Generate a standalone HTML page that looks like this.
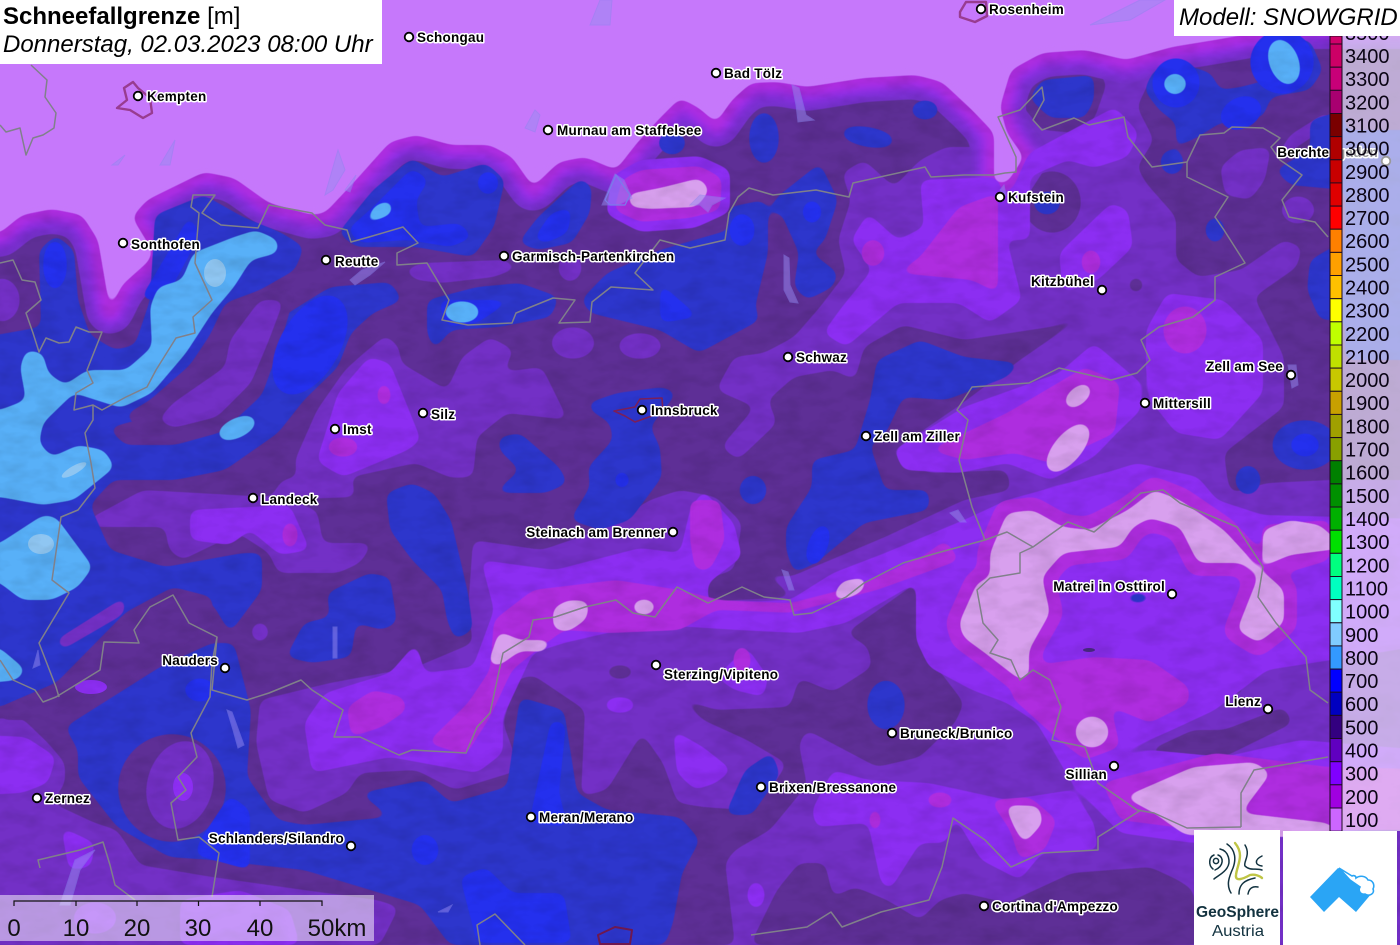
<!DOCTYPE html>
<html lang="de"><head><meta charset="utf-8"><title>Schneefallgrenze</title>
<style>
html,body{margin:0;padding:0;background:#C678FB;width:1400px;height:945px;overflow:hidden}
#w{position:relative;width:1400px;height:945px;overflow:hidden;font-family:"Liberation Sans",sans-serif}
svg{position:absolute;left:0;top:0;display:block}
.c text{font:bold 13.5px "Liberation Sans",sans-serif;letter-spacing:.25px;fill:#000;stroke:#fff;stroke-width:3px;paint-order:stroke;stroke-linejoin:round}
.c .e{text-anchor:end}
.c circle{fill:#fff;stroke:#000;stroke-width:1.8}
.b{fill:none;stroke:#80808a;stroke-width:1.5;stroke-linejoin:round}
.l{fill:#9a8cf2;stroke:#8a86ee;stroke-width:1;opacity:.5}
.box{position:absolute;background:#fff;color:#000;white-space:nowrap}
</style></head><body><div id="w">
<svg width="1400" height="945" viewBox="0 0 1400 945" xmlns="http://www.w3.org/2000/svg">
<defs>
<filter id="g" filterUnits="userSpaceOnUse" x="-100" y="-100" width="1600" height="1100" color-interpolation-filters="sRGB"><feGaussianBlur stdDeviation="5"/><feColorMatrix type="matrix" values="1 0 0 0 0 0 1 0 0 0 0 0 1 0 0 0 0 0 10 -4.5"/></filter>
<filter id="hs" filterUnits="userSpaceOnUse" x="0" y="0" width="1400" height="945" color-interpolation-filters="sRGB"><feTurbulence type="fractalNoise" baseFrequency="0.035 0.07" numOctaves="3" seed="4"/><feColorMatrix type="matrix" values="0 0 0 0 0 0 0 0 0 0 0 0 0 0 0 1.6 0 0 0 -0.62"/></filter>
<polygon id="w1" points="959,623 977,583 990,577 990,553 1007,513 1033,510 1063,527 1089,530 1128,510 1154,490 1180,500 1224,530 1258,567 1284,590 1284,623 1258,643 1237,630 1258,577 1241,563 1198,563 1180,527 1150,518 1133,527 1120,547 1063,553 1042,577 1050,613 1029,650 1029,677 1020,680 985,653 963,637"/>
<polyline id="P" points="-60,233 0,233 22,215 52,209 82,215 98,240 110,310 122,285 150,260 152,250 132,217 147,200 204,172 234,178 269,203 312,215 325,213 356,180 390,142 416,135 451,145 490,145 512,157 533,187 559,162 585,157 616,170 637,143 660,118 680,98 699,108 716,123 732,100 751,83 777,82 807,87 864,78 916,75 942,82 972,110 994,133 994,183 1007,183 1024,157 1007,133 1000,107 1011,70 1042,53 1085,50 1126,60 1172,47 1215,40 1300,25 1460,25"/>
</defs>

<rect x="0" y="0" width="1400" height="945" fill="#7330C6"/>

<!-- dark -->
<g fill="#5E2F96" filter="url(#g)">
<polygon points="-60,150 990,50 990,147 946,147 920,160 894,187 864,160 842,173 851,200 838,240 846,273 820,307 794,337 764,353 734,357 716,390 755,407 721,447 738,460 777,423 768,400 794,377 833,370 855,380 864,347 903,325 964,340 1050,327 1094,312 1059,333 1020,360 960,405 890,453 929,473 1007,470 1011,490 964,500 885,537 790,577 764,573 794,597 738,600 703,603 703,580 734,570 742,523 716,497 680,490 650,500 600,530 542,550 473,540 468,610 473,643 416,667 330,683 260,700 256,743 269,800 304,813 347,793 360,773 416,770 455,790 520,770 503,723 516,680 533,675 585,710 581,797 616,807 680,817 720,820 735,945 -60,945"/>
<polygon points="1137,167 1154,140 1137,107 1150,80 1180,63 1215,60 1270,36 1460,36 1460,480 1330,480 1267,483 1232,493 1228,483 1224,453 1284,407 1284,357 1254,297 1297,267 1302,247 1284,240 1241,270 1198,277 1176,260 1176,217 1146,183"/>
<polygon points="1020,103 1033,77 1094,68 1107,83 1094,120 1076,133 1042,130"/>
<ellipse cx="1052" cy="202" rx="29" ry="31"/>
<polygon points="680,698 716,710 790,707 799,678 833,692 872,667 868,647 846,633 916,583 938,573 955,578 920,610 916,640 964,703 955,723 920,757 877,767 807,730 799,743 803,773 747,740 703,720"/>
<polygon points="660,800 703,807 745,810 770,790 799,745 807,785 770,830 735,850 715,875 728,945 640,945"/>
<polygon points="577,797 607,790 642,733 663,763 680,810 650,810"/>
<polygon points="750,945 777,890 799,863 825,863 833,897 855,887 887,900 920,920 940,900 964,893 1007,903 1072,873 1150,867 1178,880 1193,890 1200,945"/>
<polygon points="1150,540 1176,623 1137,620 1076,603 1042,590 1059,573 1133,567"/>
<ellipse cx="1089" cy="650" rx="37" ry="14"/>
<polygon points="1176,628 1188,630 1246,690 1236,697"/>
<polygon points="1150,750 1193,730 1224,730 1284,707 1293,723 1224,757 1159,757"/>
<polygon points="1308,570 1325,575 1330,650 1312,640"/>
<ellipse cx="620" cy="672" rx="14" ry="7"/>
<ellipse cx="1136" cy="285" rx="8" ry="8"/>
</g>

<!-- mid lobes over dark -->
<g fill="#7330C6" filter="url(#g)">
<polygon points="364,353 386,335 399,347 401,363 447,390 462,357 490,337 514,350 503,372 542,367 568,420 507,413 477,437 473,477 451,478 416,463 351,477 356,497 269,500 282,480 297,477 295,460 317,410 345,370"/>
<polygon points="87,520 143,490 269,497 317,510 323,543 373,543 360,563 338,573 278,573 269,553 238,533 182,560 169,550 165,527 95,527"/>
<polygon points="403,270 423,263 503,260 520,267 494,277 442,283 416,280"/>
<ellipse cx="570" cy="268" rx="12" ry="14"/>
<ellipse cx="573" cy="343" rx="22" ry="16"/>
<ellipse cx="640" cy="346" rx="22" ry="13"/>
<polygon points="-60,720 22,718 48,743 65,763 65,783 52,803 95,823 117,830 140,865 212,877 304,890 377,900 399,907 380,945 -60,945"/>
<ellipse cx="260" cy="632" rx="9" ry="10"/>
<polygon points="1220,167 1240,150 1271,147 1265,180 1250,200 1225,195"/>
<ellipse cx="1298" cy="210" rx="17" ry="14"/>
<polygon points="1277,155 1290,135 1330,110 1330,125 1300,145 1285,155"/>
<ellipse cx="2" cy="300" rx="18" ry="22"/>
</g>

<!-- bands along the snowline -->
<g filter="url(#g)" fill="none" stroke-linejoin="round">
<use href="#P" stroke="#7330C6" stroke-width="48"/>
<use href="#P" stroke="#8C2EF2" stroke-width="32"/>
<use href="#P" stroke="#AE2DDF" stroke-width="20"/>
</g>

<!-- bright purple -->
<g fill="#8C2EF2" filter="url(#g)">
<polygon points="920,180 998,177 1011,230 1007,240 1022,300 990,323 959,303 898,303 846,347 823,333 842,307 872,270 851,240 868,213 898,240 924,227"/>
<polygon points="1029,153 1115,107 1139,133 1128,157 1094,168 1068,160 1015,183"/>
<polygon points="1059,253 1111,203 1128,210 1133,247 1098,280 1063,293"/>
<polygon points="1146,330 1167,293 1224,300 1263,340 1263,393 1220,440 1176,433 1150,400 1146,370"/>
<polygon points="894,450 964,407 1059,373 1094,343 1141,383 1141,410 1120,430 1094,457 1050,480 1007,463 959,473 903,470"/>
<polygon points="304,723 325,693 390,673 416,643 425,673 473,667 494,610 481,560 555,570 640,548 680,553 690,510 703,490 734,523 742,557 725,570 708,583 708,603 790,600 833,573 885,553 964,520 1007,500 1115,470 1137,463 1198,477 1217,500 1263,515 1460,520 1460,640 1267,670 1215,710 1172,730 1098,763 1150,750 1224,757 1300,740 1460,753 1460,823 1193,843 1120,833 1072,783 1037,723 1007,703 972,690 929,667 916,640 916,583 846,623 799,633 738,630 660,625 607,633 564,643 533,653 503,717 503,753 477,773 390,757 312,773"/>
<polygon points="812,810 833,770 868,780 929,783 1007,800 1072,790 1094,823 1098,850 1042,853 1020,880 981,860 955,817 946,843 920,843 911,857 890,890 881,883 868,823 816,827"/>
<polygon points="673,730 703,747 732,770 716,783 695,790 677,773"/>
<polygon points="716,677 747,647 768,677 764,697 734,690"/>
<ellipse cx="620" cy="705" rx="16" ry="8"/>
<polygon points="190,510 290,505 310,550 280,555 250,530 230,545 190,540"/>
<polygon points="317,460 338,393 369,357 390,363 421,440 408,450 343,477 319,463"/>
<polygon points="-60,733 26,737 56,757 48,783 22,793 -60,797"/>
<polygon points="61,827 95,843 91,867 69,870"/>
<polygon points="180,900 240,890 290,910 300,945 180,945"/>
<ellipse cx="95" cy="918" rx="22" ry="16"/>
<ellipse cx="756" cy="895" rx="9" ry="14"/>
<polygon points="612,176 640,160 700,156 730,170 730,212 695,228 640,232 606,214"/>
<polygon points="1000,200 1030,170 1030,240 1010,240"/>
</g>

<!-- magenta -->
<g fill="#AE2DDF" filter="url(#g)">
<polygon points="998,193 998,293 972,280 898,273 920,257 959,207"/>
<ellipse cx="873" cy="253" rx="12" ry="14"/>
<ellipse cx="1091" cy="262" rx="10" ry="13"/>
<ellipse cx="1185" cy="330" rx="22" ry="24"/>
<polygon points="929,450 1007,413 1085,367 1120,383 1115,433 1050,463 1015,453 964,460"/>
<polygon points="494,620 533,590 616,580 680,590 720,600 790,603 860,585 925,555 945,540 960,560 877,590 833,602 790,613 716,610 680,630 611,633 564,630 533,653 512,670 490,717 466,755 427,743 468,703 490,670"/>
<polygon points="347,707 373,690 403,697 407,710 382,727 351,737"/>
<polygon points="690,500 720,500 725,540 710,570 695,570 690,540"/>
<ellipse cx="290" cy="535" rx="8" ry="14"/>
<ellipse cx="384" cy="395" rx="7" ry="12"/>
<ellipse cx="343" cy="447" rx="16" ry="10"/>
<use href="#w1" stroke="#AE2DDF" stroke-width="26" stroke-linejoin="round"/>
<polygon points="1024,667 1094,657 1150,660 1189,687 1189,703 1150,723 1111,707 1120,747 1085,760 1059,740 1011,697"/>
<polygon points="1102,783 1215,753 1328,767 1460,770 1460,830 1198,830 1120,820"/>
<polygon points="990,800 1030,797 1057,820 1045,850 1020,860 1010,830"/>
<polygon points="622,180 640,170 700,166 722,178 720,210 690,218 640,222 614,210"/>
<polygon points="1262,525 1330,520 1330,560 1262,580"/>
<ellipse cx="940" cy="800" rx="14" ry="8"/>
<ellipse cx="875" cy="820" rx="6" ry="12"/>
<ellipse cx="742" cy="660" rx="9" ry="14"/>
</g>

<!-- pale -->
<g fill="#D8A0EE" filter="url(#g)">
<use href="#w1"/>
<polygon points="1263,530 1290,520 1320,525 1345,548 1290,555 1262,567"/>
<ellipse cx="1092" cy="732" rx="17" ry="16"/>
<polygon points="1124,797 1193,767 1254,762 1271,773 1241,813 1328,823 1345,838 1185,835 1154,813"/>
<polygon points="1005,805 1039,806 1043,823 1024,844 1014,827"/>
<polygon points="488,664 499,631 520,640 553,640 544,652 520,651 499,666"/>
<polygon points="553,629 553,608 568,600 589,601 587,619 568,632"/>
<ellipse cx="644" cy="607" rx="12" ry="8"/>
<polygon points="831,599 842,581 868,577 862,592 846,599"/>
<ellipse cx="1078" cy="396" rx="16" ry="9" transform="rotate(-40 1078 396)"/>
<ellipse cx="1068" cy="448" rx="30" ry="14" transform="rotate(-50 1068 448)"/>
<polygon points="628,194 660,188 700,178 710,190 697,207 650,209 630,207"/>
</g>

<!-- navy blue -->
<g fill="#2D36CC" filter="url(#g)">
<polygon points="-60,345 41,327 39,250 56,235 74,250 78,300 90,335 115,350 135,345 150,300 155,215 204,195 243,217 282,233 304,247 295,270 260,290 225,303 210,335 190,365 150,400 125,415 150,440 190,435 240,405 262,368 282,317 330,287 390,282 403,300 373,313 351,333 338,367 304,400 278,433 225,470 175,480 113,480 90,505 110,550 165,567 243,553 262,553 262,590 230,633 212,603 173,593 150,610 56,683 0,707 -60,707"/>
<polygon points="65,727 160,667 212,643 234,643 251,710 247,777 278,820 304,825 390,817 360,793 425,780 451,803 507,787 520,697 564,710 577,793 607,810 680,817 700,840 682,873 673,923 665,945 450,945 420,905 304,870 212,860 169,857 117,827 78,777 78,750"/>
<polygon points="386,493 412,483 434,493 451,520 468,593 473,630 455,640 447,620 442,590 412,560 390,530"/>
<polygon points="286,657 304,623 330,617 327,593 369,573 390,577 397,623 382,630 356,623 351,657 312,663"/>
<polygon points="588,403 617,393 663,387 677,393 650,427 660,447 662,477 630,520 600,530 570,520 590,487 588,467 613,440 610,423 590,410"/>
<polygon points="499,437 520,433 559,467 568,483 546,493 494,493 520,470 499,450"/>
<ellipse cx="753" cy="490" rx="14" ry="15"/>
<polygon points="877,360 920,340 964,357 1020,363 1007,377 946,400 903,397 886,433 870,445 885,490 929,490 929,510 864,523 816,563 794,573 786,550 786,527 812,487 812,460 855,450 870,400"/>
<ellipse cx="764" cy="138" rx="15" ry="26"/>
<ellipse cx="868" cy="137" rx="27" ry="10" transform="rotate(10 868 137)"/>
<ellipse cx="925" cy="110" rx="14" ry="10"/>
<polygon points="729,230 729,207 764,200 768,213 777,197 820,163 838,200 825,240 812,253 838,273 833,287 807,300 794,287 799,253 781,213 768,213 768,253 755,307 760,320 699,353 660,330 590,313 581,300 607,273 660,250"/>
<polygon points="427,300 477,287 520,283 559,297 551,317 499,327 451,330 434,350 427,333"/>
<polygon points="338,233 373,190 412,158 442,177 486,163 505,180 494,227 473,257 416,247 356,247"/>
<polygon points="518,243 538,217 581,178 592,187 590,213 572,243 538,250"/>
<ellipse cx="672" cy="143" rx="14" ry="12"/>
<polygon points="1029,98 1042,80 1094,75 1094,100 1085,118 1050,118"/>
<ellipse cx="1047" cy="203" rx="14" ry="12"/>
<polygon points="1144,90 1154,70 1180,63 1211,73 1220,90 1241,87 1267,80 1261,60 1263,40 1310,40 1323,70 1310,90 1271,97 1263,117 1220,123 1198,137 1176,147 1176,123 1159,110"/>
<ellipse cx="1172" cy="162" rx="12" ry="13"/>
<ellipse cx="1215" cy="230" rx="10" ry="13"/>
<polygon points="1310,120 1345,110 1345,190 1290,185 1275,170 1310,150"/>
<polygon points="1345,240 1310,260 1307,290 1320,320 1345,320"/>
<polygon points="1345,130 1420,130 1420,360 1345,360"/>
<ellipse cx="1305" cy="445" rx="33" ry="25"/>
<ellipse cx="1248" cy="480" rx="13" ry="15"/>
<ellipse cx="886" cy="705" rx="19" ry="25"/>
<polygon points="725,815 745,770 772,752 780,775 762,800 752,815"/>
<polygon points="648,945 662,850 672,900 665,945"/>
<ellipse cx="1138" cy="598" rx="13" ry="5"/>
</g>

<!-- dark halo + lobes drawn above blue -->
<g fill="#5E2F96" filter="url(#g)">
<polygon points="108,428 145,418 190,395 225,355 250,300 270,290 296,290 280,345 262,395 222,432 175,445 125,445"/>
<ellipse cx="172" cy="788" rx="54" ry="54" transform="rotate(10 172 788)"/>
<polygon points="0,707 56,683 126,612 173,587 212,597 214,625 130,680 70,707 40,720 0,720"/>
</g>
<g fill="#7330C6" filter="url(#g)">
<polygon points="158,420 173,403 225,367 230,340 260,300 284,300 269,340 251,383 217,417 173,428"/>
<ellipse cx="180" cy="785" rx="33" ry="45" transform="rotate(15 180 785)"/>
<polygon points="56,640 126,596 124,614 62,650"/>
</g>
<ellipse cx="183" cy="787" rx="10" ry="14" fill="#8C2EF2"/>
<ellipse cx="91" cy="687" rx="16" ry="7" fill="#8C2EF2"/>
<ellipse cx="1089" cy="650" rx="6" ry="2" fill="#4a2a85"/>

<!-- bright blue -->
<g fill="#2430EE" filter="url(#g)">
<polygon points="529,823 551,720 566,723 559,793 568,827"/>
<polygon points="460,877 486,867 512,893 564,893 572,943 477,943"/>
<ellipse cx="425" cy="850" rx="14" ry="16"/>
<polygon points="200,840 230,795 250,810 250,870 195,855"/>
<ellipse cx="200" cy="690" rx="16" ry="12"/>
<ellipse cx="742" cy="230" rx="13" ry="17"/>
<ellipse cx="812" cy="212" rx="10" ry="12"/>
<polygon points="660,283 699,317 660,323"/>
<polygon points="438,300 512,300 477,323 447,327"/>
<polygon points="347,230 373,207 412,168 429,180 416,200 420,227 460,223 473,237 451,247 408,240 360,243"/>
<ellipse cx="488" cy="183" rx="11" ry="12"/>
<polygon points="533,240 551,213 572,207 568,233 546,243"/>
<ellipse cx="1176" cy="83" rx="24" ry="25"/>
<ellipse cx="1282" cy="62" rx="32" ry="32"/>
<ellipse cx="1241" cy="113" rx="22" ry="16" transform="rotate(-25 1241 113)"/>
<ellipse cx="1305" cy="445" rx="15" ry="12"/>
<ellipse cx="818" cy="545" rx="10" ry="22" transform="rotate(20 818 545)"/>
<ellipse cx="622" cy="480" rx="8" ry="9"/>
<ellipse cx="55" cy="265" rx="12" ry="25"/>
<ellipse cx="310" cy="345" rx="30" ry="55" transform="rotate(30 310 345)"/>
<polygon points="140,300 190,215 200,235 165,300"/>
</g>

<!-- light blue -->
<g fill="#58B0F8" filter="url(#g)">
<polygon points="-60,410 0,410 26,400 20,367 26,350 43,353 48,373 65,385 87,370 126,370 152,347 150,307 158,287 182,280 193,253 234,237 256,230 278,240 278,253 251,260 234,287 212,313 186,353 152,393 121,408 74,393 43,423 39,443 52,457 78,445 104,450 115,467 74,500 43,505 0,497 -60,497"/>
<polygon points="-60,560 0,543 43,515 56,517 93,567 78,587 52,600 22,600 0,583"/>
<polygon points="-60,640 0,648 26,670 17,680 0,682 -60,682"/>
<ellipse cx="237" cy="428" rx="21" ry="10" transform="rotate(-25 237 428)"/>
<ellipse cx="462" cy="312" rx="18" ry="11"/>
<polygon points="364,224 375,205 392,200 392,214 377,220"/>
<ellipse cx="1175" cy="84" rx="12" ry="11"/>
<ellipse cx="1284" cy="62" rx="15" ry="24" transform="rotate(-20 1284 62)"/>
</g>
<g fill="#8FC6F2">
<ellipse cx="215" cy="273" rx="11" ry="14"/>
<ellipse cx="74" cy="470" rx="14" ry="4" transform="rotate(-30 74 470)"/>
<ellipse cx="41" cy="544" rx="13" ry="10"/>
</g>

<!-- hillshade -->
<rect x="0" y="0" width="1400" height="945" filter="url(#hs)" opacity=".12"/>

<!-- light outside the snowline -->
<polygon filter="url(#g)" fill="#C678FB" points="-100,-100 1500,-100 1500,25 1460,25 1300,25 1215,40 1172,47 1126,60 1085,50 1042,53 1011,70 1000,107 1007,133 1024,157 1007,183 994,183 994,133 972,110 942,82 916,75 864,78 807,87 777,82 751,83 732,100 716,123 699,108 680,98 660,118 637,143 616,170 585,157 559,162 533,187 512,157 490,145 451,145 416,135 390,142 356,180 325,213 312,215 269,203 234,178 204,172 147,200 132,217 152,250 150,260 122,285 110,310 98,240 82,215 52,209 22,215 0,233 -100,233"/>

<!-- lakes -->
<g class="l">
<polygon points="792,85 799,88 806,115 814,120 798,122 796,105"/>
<polygon points="784,255 789,258 790,285 798,303 790,302 784,290"/>
<polygon points="227,710 232,712 244,745 238,748 233,730"/>
<polygon points="333,627 337,627 337,658 333,658"/>
<polygon points="602,205 615,174 624,180 632,198 618,205"/>
<polygon points="590,25 600,0 612,0 610,25"/>
<polygon points="525,128 535,110 540,115 535,132"/>
<polygon points="345,190 356,175 350,192"/>
<polygon points="325,195 338,150 345,170 333,190"/>
<polygon points="1090,25 1140,0 1165,0 1130,20"/>
<polygon points="1000,190 1004,185 1006,195 1003,198"/>
<polygon points="690,205 700,195 725,198 712,205 708,212 700,205"/>
<polygon points="782,570 788,572 794,590 789,590"/>
<polygon points="950,513 958,510 966,522 960,522"/>
<polygon points="1288,365 1296,365 1298,385 1292,388"/>
<polygon points="350,280 362,270 385,262 370,275 355,285"/>
<polygon points="60,905 75,860 95,850 80,870 70,905"/>
<polygon points="438,912 452,905 448,912"/>
<polygon points="112,165 125,155 118,165"/>
<polygon points="160,165 175,140 170,165"/>
<polygon points="33,668 38,650 40,665"/>
</g>
<polygon points="605,200 616,175 630,195 625,205 610,205" fill="none" stroke="#7b7bea" stroke-width="1.2"/>

<!-- borders -->
<g class="b">
<polyline points="0,263 13,260 22,280 35,282 41,300 26,313 33,333 39,352 46,338 59,343 69,342 76,327 89,332 102,332 87,370 93,383 76,393 74,410 93,405 102,410 126,397 147,387 156,370 176,338 195,333 193,317 212,300 195,263 199,213 191,207 193,195 215,195 202,213 221,225 258,228 269,205 312,213 325,225 347,230 351,242 369,237 403,227 418,243 397,253 397,265 427,263 449,300 442,320 468,325 512,323 516,313 553,298 575,300 559,323 590,322 592,302 611,287 653,290 635,273 660,240 690,248 725,240 729,213 738,197 749,188 773,195 816,190 849,197 853,183 925,167 931,177 964,175 994,175 1005,173 1016,172 1016,157 998,117 1020,110 1042,87 1044,100 1033,120 1042,130 1074,118 1089,125 1124,117 1128,137 1152,167 1187,162 1200,135 1224,133 1232,127 1263,128 1280,138 1271,147 1280,160 1302,175 1282,200 1289,217 1315,222 1328,237"/>
<polyline points="1187,162 1187,177 1228,197 1215,217 1224,230 1245,263 1215,277 1215,300 1193,317 1159,327 1141,340 1150,360 1137,373 1111,380 1059,368 1029,383 972,387 957,410 968,420 959,460 972,507 985,540 937,553 903,563 864,583 846,597 812,613 794,615 790,600 764,597 742,587 708,603 677,587 660,610 655,617 633,613 616,600 585,607 555,617 533,620 529,637 503,653 490,713 477,727 466,753 412,750 399,755 373,743 360,737 334,737 343,710 312,690 301,680 269,693 247,700 212,690 217,637 189,623 173,595 150,607 134,630 139,643 104,642 100,670 56,697 43,702 35,690 13,680 0,660"/>
<polyline points="217,637 212,663 210,697 191,733 197,757 178,777 186,790 171,803 178,840 199,837 219,853 212,897"/>
<polyline points="93,405 93,420 85,433 91,463 95,488 78,510 61,517 52,580 69,593 39,643 56,687 59,697"/>
<polyline points="985,540 1007,532 1033,547 1020,553 1020,573 990,578 977,590 983,623 998,640 990,653 1011,660 1020,680 1033,670 1050,680 1061,707 1052,740 1085,747 1098,783 1137,810 1154,813 1187,828 1241,827"/>
<polyline points="1033,547 1068,522 1094,532 1141,493 1163,490 1180,503 1237,527 1263,567 1258,597 1276,623 1306,657 1310,690 1328,703"/>
<polyline points="1328,757 1254,770 1241,793 1241,827"/>
<polyline points="1141,810 1098,837 1098,850 1042,853 1011,867 985,840 953,818 942,867 929,900 881,912 842,927 831,912 807,927 751,935"/>
<polyline points="31,65 47,80 45,97 56,113 54,128 43,135 33,138 26,155 20,128 6,132 0,125"/>
<polyline points="40,868 38,860 80,850 103,842 110,865 115,885 135,900"/>
<polyline points="480,945 477,925 495,914 525,945"/>
</g>

<!-- city outlines -->
<g fill="none" stroke-linejoin="round">
<polygon points="117,108 127,100 124,88 133,82 138,88 150,98 152,113 143,118 130,110" stroke="#983C90" stroke-width="2.4"/>
<polygon points="614,411 635,407 640,399 662,398 663,412 635,422 625,416" stroke="#7A1F5A" stroke-width="1.6"/>
<polygon points="960,12 966,2 986,2 987,16 975,22 960,17" stroke="#983C90" stroke-width="2.4"/>
<polygon points="598,935 615,927 632,930 630,944 600,944" stroke="#6E1850" stroke-width="2"/>
</g>

<!-- cities -->
<g class="c">
<circle cx="409" cy="37" r="4.3"/><text x="417" y="42">Schongau</text>
<circle cx="138" cy="96" r="4.3"/><text x="147" y="101">Kempten</text>
<circle cx="981" cy="9" r="4.3"/><text x="989" y="14">Rosenheim</text>
<circle cx="716" cy="73" r="4.3"/><text x="724" y="78">Bad Tölz</text>
<circle cx="548" cy="130" r="4.3"/><text x="557" y="135">Murnau am Staffelsee</text>
<circle cx="1000" cy="197" r="4.3"/><text x="1008" y="202">Kufstein</text>
<circle cx="123" cy="243" r="4.3"/><text x="131" y="249">Sonthofen</text>
<circle cx="326" cy="260" r="4.3"/><text x="335" y="266">Reutte</text>
<circle cx="504" cy="256" r="4.3"/><text x="512" y="261">Garmisch-Partenkirchen</text>
<circle cx="1102" cy="290" r="4.3"/><text class="e" x="1094" y="286">Kitzbühel</text>
<circle cx="788" cy="357" r="4.3"/><text x="796" y="362">Schwaz</text>
<circle cx="1291" cy="375" r="4.3"/><text class="e" x="1283" y="371">Zell am See</text>
<circle cx="1145" cy="403" r="4.3"/><text x="1153" y="408">Mittersill</text>
<circle cx="642" cy="410" r="4.3"/><text x="651" y="415">Innsbruck</text>
<circle cx="423" cy="413" r="4.3"/><text x="431" y="419">Silz</text>
<circle cx="335" cy="429" r="4.3"/><text x="343" y="434">Imst</text>
<circle cx="866" cy="436" r="4.3"/><text x="874" y="441">Zell am Ziller</text>
<circle cx="253" cy="498" r="4.3"/><text x="261" y="504">Landeck</text>
<circle cx="673" cy="532" r="4.3"/><text class="e" x="666" y="537">Steinach am Brenner</text>
<circle cx="1172" cy="594" r="4.3"/><text class="e" x="1165" y="591">Matrei in Osttirol</text>
<circle cx="225" cy="668" r="4.3"/><text class="e" x="218" y="665">Nauders</text>
<circle cx="656" cy="665" r="4.3"/><text x="664" y="679">Sterzing/Vipiteno</text>
<circle cx="1268" cy="709" r="4.3"/><text class="e" x="1261" y="706">Lienz</text>
<circle cx="892" cy="733" r="4.3"/><text x="900" y="738">Bruneck/Brunico</text>
<circle cx="1114" cy="766" r="4.3"/><text class="e" x="1107" y="779">Sillian</text>
<circle cx="761" cy="787" r="4.3"/><text x="769" y="792">Brixen/Bressanone</text>
<circle cx="37" cy="798" r="4.3"/><text x="45" y="803">Zernez</text>
<circle cx="531" cy="817" r="4.3"/><text x="539" y="822">Meran/Merano</text>
<circle cx="351" cy="846" r="4.3"/><text class="e" x="344" y="843">Schlanders/Silandro</text>
<circle cx="984" cy="906" r="4.3"/><text x="992" y="911">Cortina d'Ampezzo</text>
<circle cx="1386" cy="161" r="4.3"/><text class="e" x="1378" y="157">Berchtesgaden</text>
</g>

<!-- legend overlay -->
<rect x="1342" y="36" width="58" height="795" fill="#fff" fill-opacity=".6"/>
<g stroke="#1c0a20" stroke-width="1">
<rect x="1330" y="36" width="12" height="8" fill="#D0006A"/>
<rect x="1330" y="44" width="12" height="23.2" fill="#CC0066"/>
<rect x="1330" y="67.2" width="12" height="23.2" fill="#C80078"/>
<rect x="1330" y="90.3" width="12" height="23.2" fill="#A80070"/>
<rect x="1330" y="113.5" width="12" height="23.2" fill="#7A0000"/>
<rect x="1330" y="136.6" width="12" height="23.2" fill="#B00000"/>
<rect x="1330" y="159.8" width="12" height="23.2" fill="#C80000"/>
<rect x="1330" y="182.9" width="12" height="23.2" fill="#E00000"/>
<rect x="1330" y="206.1" width="12" height="23.2" fill="#FF0000"/>
<rect x="1330" y="229.2" width="12" height="23.2" fill="#FF8000"/>
<rect x="1330" y="252.4" width="12" height="23.2" fill="#FFA000"/>
<rect x="1330" y="275.5" width="12" height="23.2" fill="#FFC000"/>
<rect x="1330" y="298.7" width="12" height="23.2" fill="#FFFF00"/>
<rect x="1330" y="321.8" width="12" height="23.2" fill="#BFFF00"/>
<rect x="1330" y="345" width="12" height="23.2" fill="#C0E000"/>
<rect x="1330" y="368.1" width="12" height="23.2" fill="#C8C800"/>
<rect x="1330" y="391.3" width="12" height="23.2" fill="#C8A000"/>
<rect x="1330" y="414.4" width="12" height="23.2" fill="#A0A000"/>
<rect x="1330" y="437.6" width="12" height="23.2" fill="#88A000"/>
<rect x="1330" y="460.7" width="12" height="23.2" fill="#008000"/>
<rect x="1330" y="483.9" width="12" height="23.2" fill="#009000"/>
<rect x="1330" y="507" width="12" height="23.2" fill="#00B000"/>
<rect x="1330" y="530.2" width="12" height="23.2" fill="#00E000"/>
<rect x="1330" y="553.3" width="12" height="23.2" fill="#00FF80"/>
<rect x="1330" y="576.5" width="12" height="23.2" fill="#00FFC0"/>
<rect x="1330" y="599.6" width="12" height="23.2" fill="#80FFFF"/>
<rect x="1330" y="622.8" width="12" height="23.2" fill="#80CCFF"/>
<rect x="1330" y="645.9" width="12" height="23.2" fill="#3399FF"/>
<rect x="1330" y="669.1" width="12" height="23.2" fill="#0000FF"/>
<rect x="1330" y="692.2" width="12" height="23.2" fill="#0000C0"/>
<rect x="1330" y="715.4" width="12" height="23.2" fill="#330080"/>
<rect x="1330" y="738.5" width="12" height="23.2" fill="#6000C0"/>
<rect x="1330" y="761.7" width="12" height="23.2" fill="#8000FF"/>
<rect x="1330" y="784.8" width="12" height="23.2" fill="#A000E0"/>
<rect x="1330" y="808" width="12" height="23.2" fill="#CC66FF"/>
</g>
<g font-family="'Liberation Sans',sans-serif" font-size="20" fill="#0a0414">
<text x="1345" y="40">3500</text>
<text x="1345" y="63">3400</text><text x="1345" y="86">3300</text><text x="1345" y="109.5">3200</text><text x="1345" y="132.5">3100</text><text x="1345" y="155.5">3000</text><text x="1345" y="179">2900</text><text x="1345" y="202">2800</text><text x="1345" y="225">2700</text><text x="1345" y="248">2600</text><text x="1345" y="271.5">2500</text><text x="1345" y="294.5">2400</text><text x="1345" y="317.5">2300</text><text x="1345" y="341">2200</text><text x="1345" y="364">2100</text><text x="1345" y="387">2000</text><text x="1345" y="410">1900</text><text x="1345" y="433.5">1800</text><text x="1345" y="456.5">1700</text><text x="1345" y="479.5">1600</text><text x="1345" y="503">1500</text><text x="1345" y="526">1400</text><text x="1345" y="549">1300</text><text x="1345" y="572.5">1200</text><text x="1345" y="595.5">1100</text><text x="1345" y="618.5">1000</text><text x="1345" y="642">900</text><text x="1345" y="665">800</text><text x="1345" y="688">700</text><text x="1345" y="711">600</text><text x="1345" y="734.5">500</text><text x="1345" y="757.5">400</text><text x="1345" y="780.5">300</text><text x="1345" y="804">200</text><text x="1345" y="827">100</text>
</g>

<!-- scale bar -->
<rect x="0" y="895" width="374" height="46" fill="#fff" fill-opacity=".5"/>
<g stroke="#111" stroke-width="1.2" fill="none">
<polyline points="14,906 14,901 322,901 322,906"/>
<path d="M76,901v5M137,901v5M198.500,901v5M260,901v5"/>
</g>
<g font-family="'Liberation Sans',sans-serif" font-size="24" fill="#111" text-anchor="middle">
<text x="14" y="936">0</text><text x="76" y="936">10</text><text x="137" y="936">20</text><text x="198" y="936">30</text><text x="260" y="936">40</text><text x="337" y="936">50km</text>
</g>

<!-- GeoSphere logo -->
<rect x="1194" y="830" width="86" height="115" fill="#fff"/>
<g fill="none" stroke="#12323F" stroke-width="1.5" stroke-linecap="round">
<circle cx="1216" cy="861" r="2.6"/>
<path d="M1214,855 C1209,857 1208,865 1213,869"/>
<path d="M1218,855 C1224,857 1224,866 1215,870"/>
<path d="M1220,849 C1229,851 1231,862 1227,868 C1224,873 1219,875 1214,879"/>
<path d="M1227,844 C1236,850 1236,860 1233,868 C1229,877 1226,885 1231,893"/>
<path d="M1245,845 C1251,855 1243,862 1245,866 C1250,871 1256,868 1262,870"/>
<path d="M1262,856 C1254,860 1255,865 1262,866"/>
<path d="M1239,894 C1239,884 1245,880 1255,878"/>
<path d="M1248,894 C1249,888 1253,886 1258,887"/>
</g>
<path d="M1235,843 C1245,855 1237,865 1236,875 C1235,882 1243,879 1250,875 C1255,874 1260,876 1262,878" fill="none" stroke="#BFC545" stroke-width="2.4" stroke-linecap="round"/>
<text x="1196" y="917" textLength="83" lengthAdjust="spacingAndGlyphs" font-family="'Liberation Sans',sans-serif" font-weight="bold" font-size="16" fill="#12323F">GeoSphere</text>
<text x="1212" y="936" textLength="52" lengthAdjust="spacingAndGlyphs" font-family="'Liberation Sans',sans-serif" font-size="16" fill="#12323F">Austria</text>

<!-- second logo -->
<rect x="1283" y="831" width="114" height="114" fill="#fff"/>
<polygon points="1310,897 1338,868 1372,893 1356,912 1339,897 1324,912" fill="#2AA5F5"/>
<g fill="#fff" stroke="#2AA5F5" stroke-width="1.6">
<path d="M1339,868 L1352,876 C1354,875 1356,876 1356,878 C1360,875 1366,876 1368,880 C1373,880 1375,885 1373,889 C1375,893 1370,897 1365,894 C1360,895 1358,890 1360,887 L1350,880 Z"/>
</g>
</svg>

<div class="box" style="left:0;top:0;width:382px;height:64px;font-size:24px;line-height:28px">
<div style="position:absolute;left:3px;top:3px"><b>Schneefallgrenze</b> [m]</div>
<div style="position:absolute;left:3px;top:31px;font-style:italic">Donnerstag, 02.03.2023 08:00 Uhr</div>
</div>
<div class="box" style="left:1174px;top:0;width:226px;height:36px;font-size:24px;font-style:italic;line-height:36px;text-indent:5px">Modell: SNOWGRID</div>
</div></body></html>
